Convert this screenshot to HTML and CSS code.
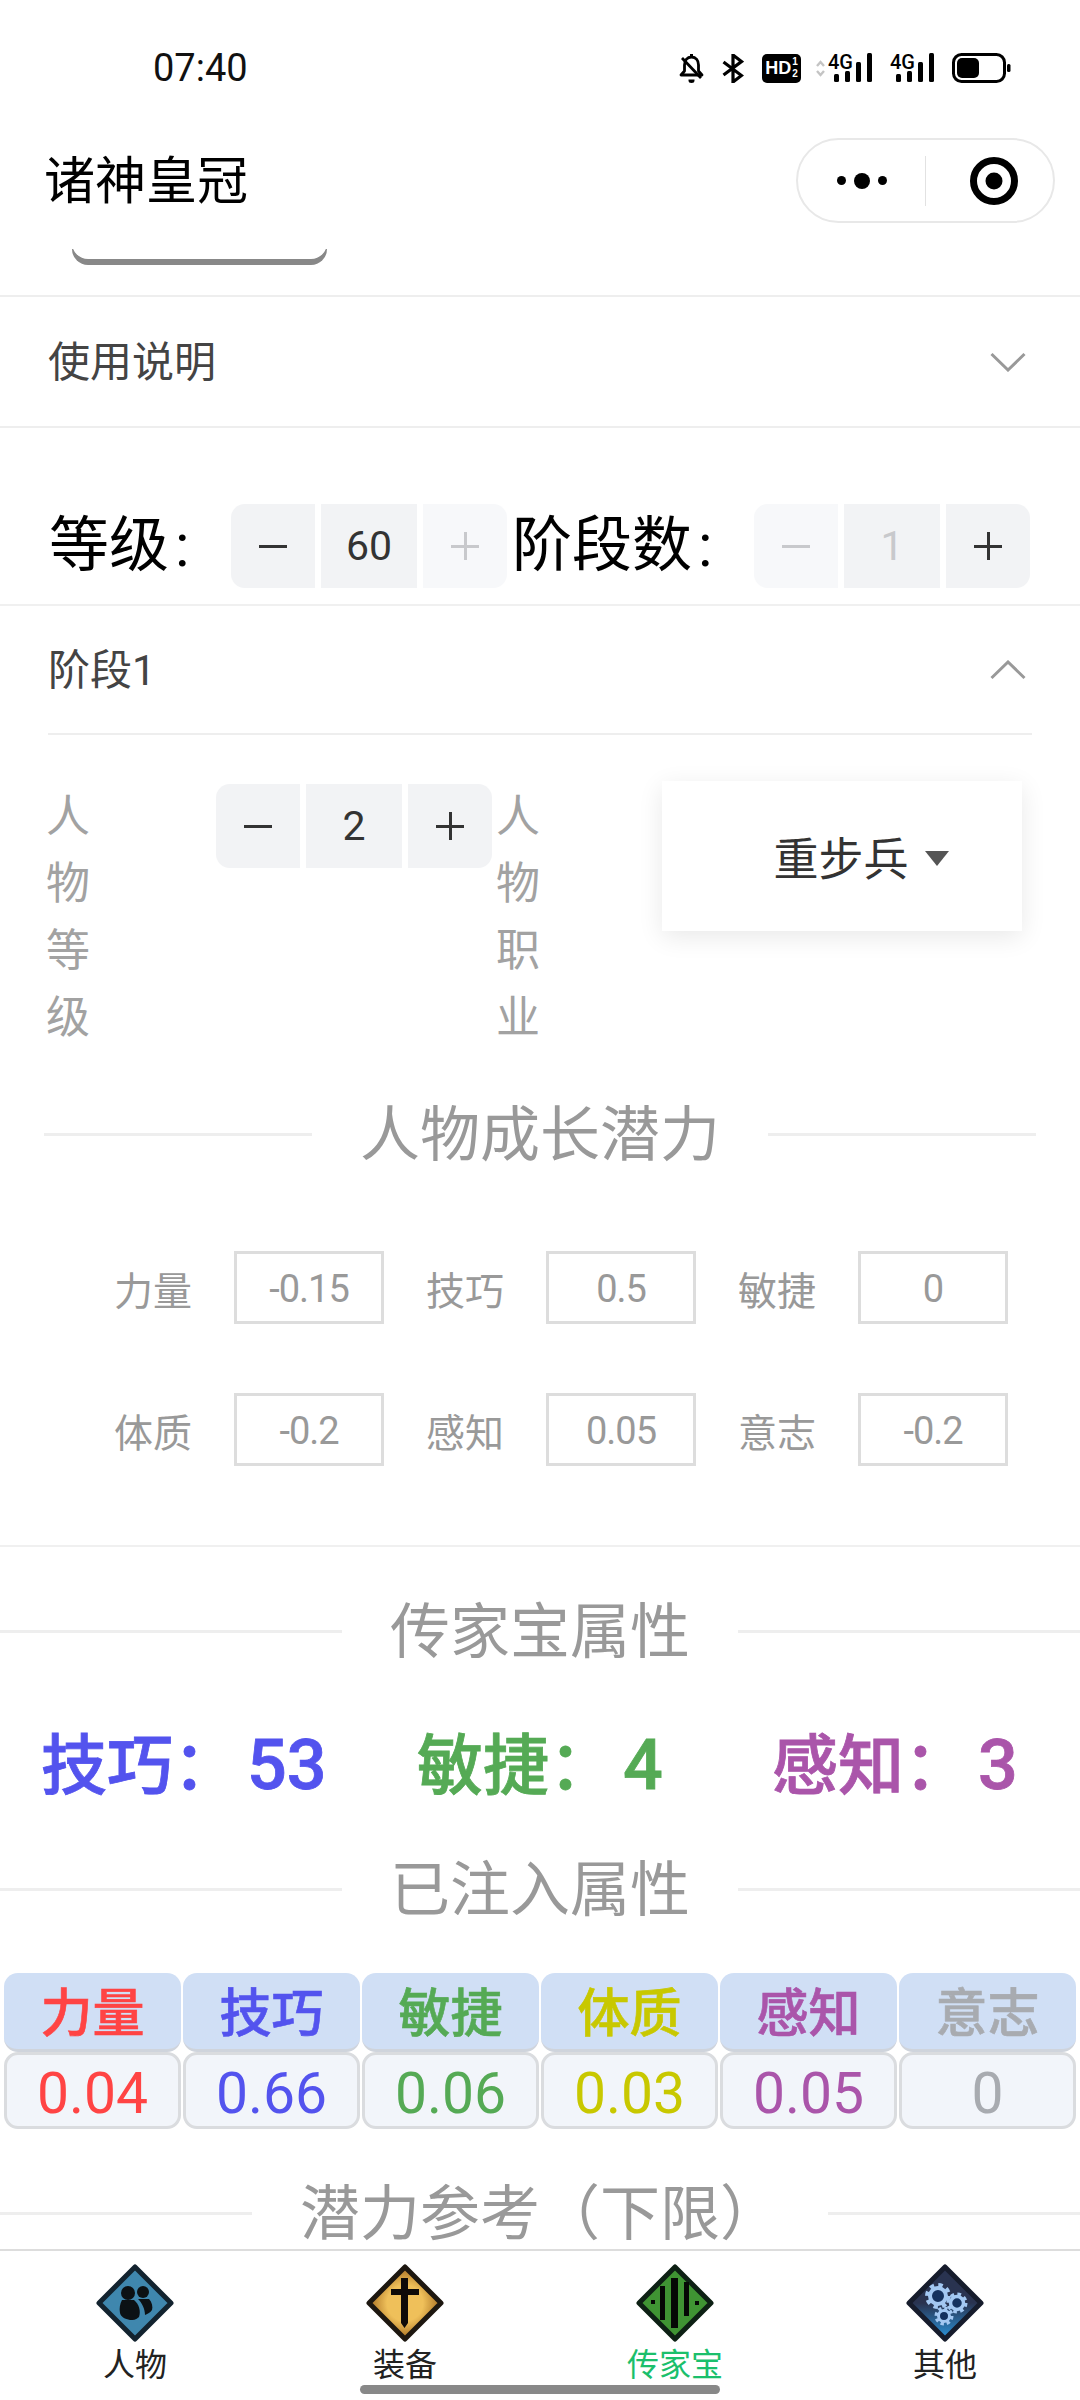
FILE: index.html
```html
<!DOCTYPE html>
<html lang="en">
<head>
    <meta charset="UTF-8">
    <title>诸神皇冠</title>
    <link rel="stylesheet" href="styles.css">
</head>
<body>
<div id="app">

    <div class="status-bar">
        <span class="clock">07:40</span>
        <div class="status-icons">
            <svg class="st-bell" width="25" height="29" viewBox="0 0 25 29"><path d="M12.5 3c-4.5 0-7 3.500-7 8v6l-3.500 4h21l-3.500-4v-6c0-4.500-2.500-8-7-8z" fill="none" stroke="#000" stroke-width="2.800" stroke-linejoin="round"/><path d="M3 4l19 20" stroke="#000" stroke-width="2.800"/><path d="M9.500 25.500h6v1a3 2.500 0 0 1-6 0z" fill="#000"/><rect x="11" y="0" width="3" height="3" fill="#000"/></svg>
            <svg class="st-bt" width="22" height="29" viewBox="0 0 22 29"><path d="M1.500 8l18 13.500-8.500 6.500v-27l8.500 6.500-18 13.500" fill="none" stroke="#000" stroke-width="3.200"/></svg>
            <div class="st-hd"><span>HD</span><span class="st-hd-num">1<br>2</span></div>
            <svg class="st-arrows" width="9" height="17" viewBox="0 0 9 17"><path d="M1 6l3.500-4 3.500 4M1 11l3.500 4 3.500-4" fill="none" stroke="#c4c4c4" stroke-width="2.400"/></svg>
            <svg class="st-signal" width="46" height="40" viewBox="0 -10 46 40"><text x="0" y="16" class="st-4g">4G</text><rect x="6" y="21" width="5" height="8" rx="1.500"/><rect x="17" y="18" width="5" height="11" rx="1.500"/><rect x="28" y="9" width="5" height="20" rx="1.500"/><rect x="39" y="0" width="5" height="29" rx="1.500"/></svg>
            <svg class="st-signal" width="46" height="40" viewBox="0 -10 46 40"><text x="0" y="16" class="st-4g">4G</text><rect x="6" y="21" width="5" height="8" rx="1.500"/><rect x="17" y="18" width="5" height="11" rx="1.500"/><rect x="28" y="9" width="5" height="20" rx="1.500"/><rect x="39" y="0" width="5" height="29" rx="1.500"/></svg>
            <svg class="st-battery" width="59" height="30" viewBox="0 0 59 30"><rect x="1.500" y="1.500" width="51" height="27" rx="8" fill="none" stroke="#000" stroke-width="3"/><rect x="5" y="5" width="22" height="20" rx="5"/><rect x="55" y="11" width="3.500" height="8" rx="1.500"/></svg>
        </div>
    </div>

    <div class="nav-bar">
        <span class="nav-title">诸神皇冠</span>
        <div class="capsule">
            <div class="capsule-dots"><i class="dot-s"></i><i class="dot-l"></i><i class="dot-s"></i></div>
            <div class="capsule-line"></div>
            <svg class="capsule-target" width="50" height="50" viewBox="0 0 50 50"><circle cx="25" cy="25" r="20.500" fill="none" stroke="#000" stroke-width="7"/><circle cx="25" cy="25" r="8.500"/></svg>
        </div>
    </div>

    <div class="content">
        <div class="tab-stub"></div>

        <div class="collapse-head first-head">
            <span>使用说明</span>
            <svg width="36" height="20" viewBox="0 0 36 20"><path d="M1.500 2l16.500 16 16.500-16" fill="none" stroke="#999" stroke-width="3"/></svg>
        </div>

        <div class="level-row">
            <span class="big-label label-level">等级<b>:</b></span>
            <div class="stepper">
                <div class="step-btn minus"></div>
                <div class="step-val">60</div>
                <div class="step-btn plus off"></div>
            </div>
            <span class="big-label label-stage">阶段数<b>:</b></span>
            <div class="stepper">
                <div class="step-btn minus off"></div>
                <div class="step-val off">1</div>
                <div class="step-btn plus"></div>
            </div>
        </div>

        <div class="stage-head">
            <div class="collapse-head inner-head">
                <span>阶段1</span>
                <svg width="36" height="20" viewBox="0 0 36 20"><path d="M1.500 18l16.500-16 16.500 16" fill="none" stroke="#999" stroke-width="3"/></svg>
            </div>
        </div>

        <div class="role-row">
            <div class="char-label">人物等级</div>
            <div class="stepper role-stepper">
                <div class="step-btn minus"></div>
                <div class="step-val">2</div>
                <div class="step-btn plus"></div>
            </div>
            <div class="char-label second">人物职业</div>
            <div class="dropdown"><span>重步兵</span><i class="caret"></i></div>
        </div>

        <div class="divider inset"><i></i><span>人物成长潜力</span><i></i></div>

        <div class="growth-grid">
            <div class="growth-item"><label>力量</label><div class="growth-input">-0.15</div></div>
            <div class="growth-item"><label>技巧</label><div class="growth-input">0.5</div></div>
            <div class="growth-item"><label>敏捷</label><div class="growth-input">0</div></div>
            <div class="growth-item"><label>体质</label><div class="growth-input">-0.2</div></div>
            <div class="growth-item"><label>感知</label><div class="growth-input">0.05</div></div>
            <div class="growth-item"><label>意志</label><div class="growth-input">-0.2</div></div>
        </div>

        <div class="section-top">
            <div class="divider"><i></i><span>传家宝属性</span><i></i></div>
        </div>

        <div class="heirloom-row">
            <span class="c-blue">技巧：<em>53</em></span>
            <span class="c-green">敏捷：<em>4</em></span>
            <span class="c-purple">感知：<em>3</em></span>
        </div>

        <div class="divider injected"><i></i><span>已注入属性</span><i></i></div>

        <div class="stat-table">
            <div class="stat-col c-red"><div class="stat-name">力量</div><div class="stat-val">0.04</div></div>
            <div class="stat-col c-blue"><div class="stat-name">技巧</div><div class="stat-val">0.66</div></div>
            <div class="stat-col c-green"><div class="stat-name">敏捷</div><div class="stat-val">0.06</div></div>
            <div class="stat-col c-yellow"><div class="stat-name">体质</div><div class="stat-val">0.03</div></div>
            <div class="stat-col c-purple"><div class="stat-name">感知</div><div class="stat-val">0.05</div></div>
            <div class="stat-col c-gray"><div class="stat-name">意志</div><div class="stat-val">0</div></div>
        </div>

        <div class="divider reference"><i></i><span>潜力参考（下限）</span><i></i></div>
    </div>

    <div class="tab-bar">
        <div class="tab">
            <svg width="78" height="78" viewBox="0 0 78 78">
                <path d="M39 3L75 39 39 75 3 39z" fill="#3f87ae" stroke="#13232f" stroke-width="5" stroke-linejoin="round"/>
                <circle cx="47" cy="28" r="6" fill="#0c1114"/><path d="M42 35h11c3 3 4 8 3 11-2 3-5 4-7 5 0-6-3-12-7-16z" fill="#0c1114"/>
                <circle cx="32" cy="29" r="7" fill="#0c1114"/><path d="M26 36h12c5 4 7 11 5 17-3 3-6 3-9 3-5-1-9-3-10-7-1-5 0-9 2-13z" fill="#0c1114"/>
            </svg>
            <span>人物</span>
        </div>
        <div class="tab">
            <svg width="78" height="78" viewBox="0 0 78 78">
                <defs><radialGradient id="gold"><stop offset="0.500" stop-color="#efc05a"/><stop offset="1" stop-color="#a86f22"/></radialGradient></defs>
                <path d="M39 3L75 39 39 75 3 39z" fill="url(#gold)" stroke="#1d1710" stroke-width="5" stroke-linejoin="round"/>
                <path d="M35 14h7v11h11v6H42v28l-3.500 5-3.500-5V31H25v-6h10z" fill="#0e0a08"/>
            </svg>
            <span>装备</span>
        </div>
        <div class="tab">
            <svg width="78" height="78" viewBox="0 0 78 78">
                <path d="M39 3L75 39 39 75 3 39z" fill="#3f9433" stroke="#0d2014" stroke-width="5" stroke-linejoin="round"/>
                <rect x="35" y="14" width="7" height="50" fill="#050805"/>
                <rect x="24" y="22" width="5" height="34" fill="#050805"/>
                <rect x="48" y="18" width="5" height="34" fill="#050805"/>
                <rect x="15" y="36" width="4" height="4" fill="#050805"/>
                <rect x="59" y="37" width="4" height="4" fill="#050805"/>
            </svg>
            <span class="active">传家宝</span>
        </div>
        <div class="tab">
            <svg width="78" height="78" viewBox="0 0 78 78">
                <defs><linearGradient id="navy" x1="0" y1="0" x2="0" y2="1"><stop offset="0.500" stop-color="#293350"/><stop offset="1" stop-color="#2b95dc"/></linearGradient></defs>
                <path d="M39 3L75 39 39 75 3 39z" fill="url(#navy)" stroke="#161c2c" stroke-width="5" stroke-linejoin="round"/>
                <g fill="#14315e" stroke="#a3c8f2">
                    <circle cx="32" cy="32" r="10" stroke-width="6" stroke-dasharray="4 3.850"/>
                    <circle cx="32" cy="32" r="8" fill="none" stroke-width="4"/>
                    <circle cx="51" cy="39" r="8" stroke-width="5" stroke-dasharray="3.300 3"/>
                    <circle cx="51" cy="39" r="6.500" fill="none" stroke-width="3.500"/>
                    <circle cx="38" cy="52" r="7" stroke-width="5" stroke-dasharray="3 2.500"/>
                    <circle cx="38" cy="52" r="5.500" fill="none" stroke-width="3"/>
                </g>
            </svg>
            <span>其他</span>
        </div>
    </div>

    <div class="home-bar"></div>
</div>
</body>
</html>
```

FILE: styles.css
```css
* {
    box-sizing: border-box;
}
body {
    margin: 0;
    background: #fff;
    font-family: Roboto, "Noto Sans CJK SC", sans-serif;
    color: #333;
}
#app {
    position: relative;
    width: 1080px;
    height: 2400px;
    display: flex;
    flex-direction: column;
    overflow: hidden;
}

/* status bar */
.status-bar {
    height: 118px;
    padding: 18px 69px 0 153px;
    display: flex;
    justify-content: space-between;
    align-items: center;
    flex-shrink: 0;
}
.clock {
    font-size: 38px;
    color: #111;
}
.status-icons {
    display: flex;
    align-items: center;
}
.status-icons svg {
    display: block;
}
.st-bt {
    margin-left: 18px;
}
.st-hd {
    margin-left: 18px;
    width: 39px;
    height: 29px;
    background: #000;
    border-radius: 5px;
    color: #fff;
    font-family: "Liberation Sans", sans-serif;
    font-weight: 700;
    font-size: 18px;
    display: flex;
    align-items: center;
    justify-content: center;
}
.st-hd-num {
    font-size: 10px;
    line-height: 12px;
    margin-left: 1px;
}
.st-arrows {
    margin-left: 15px;
}
.st-signal {
    margin: -10px 0 0 3px;
    fill: #000;
}
.st-signal + .st-signal {
    margin-left: 16px;
}
.st-4g {
    font-family: Roboto, sans-serif;
    font-size: 20px;
    font-weight: 500;
}
.st-battery {
    margin-left: 16px;
}

/* nav bar */
.nav-bar {
    height: 125px;
    padding: 0 25px 0 44px;
    display: flex;
    justify-content: space-between;
    align-items: center;
    flex-shrink: 0;
    background: #fff;
    position: relative;
    z-index: 1;
}
.nav-title {
    font-size: 51px;
    color: #000;
    margin-bottom: 8px;
}
.capsule {
    width: 259px;
    height: 85px;
    border: 2px solid #e8e8e8;
    border-radius: 43px;
    display: flex;
    align-items: center;
}
.capsule-dots {
    width: 127px;
    display: flex;
    justify-content: center;
    align-items: center;
    gap: 8px;
}
.capsule-dots i {
    display: block;
    border-radius: 50%;
    background: #000;
}
.dot-s {
    width: 9px;
    height: 9px;
}
.dot-l {
    width: 16px;
    height: 16px;
}
.capsule-line {
    width: 1px;
    height: 50px;
    background: #e2e2e2;
}
.capsule-target {
    margin-left: 43px;
}

/* page content */
.content {
    flex: 1;
    overflow: hidden;
}
.tab-stub {
    width: 255px;
    height: 16px;
    margin: 0 0 36px 72px;
    background: #fff;
    border-radius: 0 0 26px 26px;
    box-shadow: 0 6px 0 #888;
}
.collapse-head {
    display: flex;
    justify-content: space-between;
    align-items: center;
    font-size: 42px;
    color: #444;
}
.collapse-head span {
    margin-bottom: 7px;
}
.first-head {
    height: 133px;
    padding: 0 54px 0 48px;
    border-top: 2px solid #eee;
    border-bottom: 2px solid #eee;
}
.level-row {
    margin-top: 76px;
    padding-left: 49px;
    display: flex;
    align-items: center;
}
.big-label {
    font-size: 60px;
    line-height: 84px;
    color: #000;
}
.big-label b {
    font-weight: 400;
    margin-left: 6px;
}
.label-level {
    width: 182px;
    white-space: nowrap;
}
.label-stage {
    width: 242px;
    margin-left: 5px;
    white-space: nowrap;
}
.stepper {
    display: flex;
    gap: 6px;
    flex-shrink: 0;
}
.step-btn {
    --ic: #333;
    width: 84px;
    height: 84px;
    background: #f2f3f5;
}
.step-btn.minus {
    border-radius: 14px 0 0 14px;
    background: linear-gradient(var(--ic), var(--ic)) center / 28px 3px no-repeat, #f2f3f5;
}
.step-btn.plus {
    border-radius: 0 14px 14px 0;
    background:
        linear-gradient(var(--ic), var(--ic)) center / 28px 3px no-repeat,
        linear-gradient(var(--ic), var(--ic)) center / 3px 28px no-repeat,
        #f2f3f5;
}
.step-btn.minus.off {
    --ic: #c8c9cc;
    background: linear-gradient(var(--ic), var(--ic)) center / 28px 3px no-repeat, #f7f8fa;
}
.step-btn.plus.off {
    --ic: #c8c9cc;
    background:
        linear-gradient(var(--ic), var(--ic)) center / 28px 3px no-repeat,
        linear-gradient(var(--ic), var(--ic)) center / 3px 28px no-repeat,
        #f7f8fa;
}
.step-val {
    width: 96px;
    height: 84px;
    background: #f2f3f5;
    font-size: 41px;
    line-height: 84px;
    text-align: center;
    color: #333;
}
.step-val.off {
    color: #c8c9cc;
}
.stage-head {
    margin-top: 16px;
    border-top: 2px solid #f0f0f0;
    padding: 0 48px;
}
.inner-head {
    height: 129px;
    padding-right: 6px;
    border-bottom: 2px solid #eee;
}
.role-row {
    margin-top: 46px;
    padding-left: 46px;
    height: 268px;
    display: flex;
    align-items: flex-start;
}
.char-label {
    width: 44px;
    font-size: 44px;
    line-height: 67px;
    color: #a2a2a2;
    margin-right: 126px;
    flex-shrink: 0;
    padding-top: 3px;
}
.char-label.second {
    margin: 0 122px 0 4px;
}
.role-stepper {
    margin-top: 3px;
}
.dropdown {
    width: 360px;
    height: 150px;
    padding-left: 38px;
    background: #fff;
    box-shadow: 0 6px 24px rgba(0, 0, 0, 0.09);
    display: flex;
    justify-content: center;
    align-items: center;
    gap: 16px;
    font-size: 45px;
    color: #333;
}
.caret {
    width: 0;
    height: 0;
    border-left: 12px solid transparent;
    border-right: 12px solid transparent;
    border-top: 15px solid #555;
    margin-top: 4px;
}

/* dividers */
.divider {
    height: 100px;
    display: flex;
    align-items: center;
    gap: 48px;
    font-size: 60px;
    color: #999;
}
.divider span {
    margin-bottom: 10px;
}
.divider i {
    flex: 1;
    height: 3px;
    background: #eee;
}
.divider.inset {
    margin-top: 35px;
    padding: 0 44px;
}
.growth-grid {
    margin-top: 67px;
    padding-left: 114px;
    display: grid;
    grid-template-columns: repeat(3, 312px);
    row-gap: 69px;
}
.growth-item {
    display: flex;
    align-items: center;
}
.growth-item label {
    width: 120px;
    font-size: 39px;
    color: #999;
}
.growth-input {
    width: 150px;
    height: 73px;
    border: 3px solid #ddd;
    font-size: 38px;
    line-height: 71px;
    letter-spacing: -1px;
    text-align: center;
    color: #999;
}
.section-top {
    margin-top: 79px;
    padding-top: 34px;
    border-top: 2px solid #f0f0f0;
}
.heirloom-row {
    margin-top: 31px;
    padding-left: 41px;
    height: 100px;
    display: grid;
    grid-template-columns: 376px 355px auto;
    align-items: center;
    font-size: 66px;
    font-weight: 500;
    -webkit-text-stroke: 0.8px currentColor;
    white-space: nowrap;
}
.heirloom-row span {
    margin-bottom: 16px;
}
.heirloom-row em {
    font-style: normal;
    font-size: 70px;
    margin-left: 8px;
}
.divider.injected {
    margin-top: 27px;
}
.divider.reference {
    margin-top: 34px;
}

/* stats table */
.stat-table {
    margin-top: 34px;
    padding-left: 3px;
    display: flex;
}
.stat-col {
    width: 179px;
    padding: 0 1px;
    text-align: center;
    font-size: 52px;
}
.stat-name {
    height: 79px;
    line-height: 84px;
    font-weight: 500;
    -webkit-text-stroke: 0.6px currentColor;
    background: #d0dff5;
    border-bottom: 3px solid #cfd4dc;
    border-radius: 14px;
}
.stat-val {
    height: 77px;
    line-height: 78px;
    font-size: 57px;
    background: #f2f5fa;
    border: 3px solid #dadcdf;
    border-radius: 14px;
}
.c-red { color: #f44; }
.c-blue { color: #5353ee; }
.c-green { color: #55aa55; }
.c-yellow { color: #c8c800; }
.c-purple { color: #aa55aa; }
.c-gray { color: #a8abb0; }

/* tab bar */
.tab-bar {
    height: 151px;
    flex-shrink: 0;
    border-top: 2px solid #ddd;
    background: #fff;
    display: flex;
    padding-top: 13px;
}
.tab {
    width: 270px;
    display: flex;
    flex-direction: column;
    align-items: center;
    font-size: 32px;
    line-height: 38px;
    color: #222;
}
.tab svg {
    display: block;
    margin-bottom: 4px;
}
.tab .active {
    color: #1bbf6c;
}
.home-bar {
    position: absolute;
    left: 360px;
    top: 2385px;
    width: 360px;
    height: 9px;
    border-radius: 5px;
    background: #888;
}
```
